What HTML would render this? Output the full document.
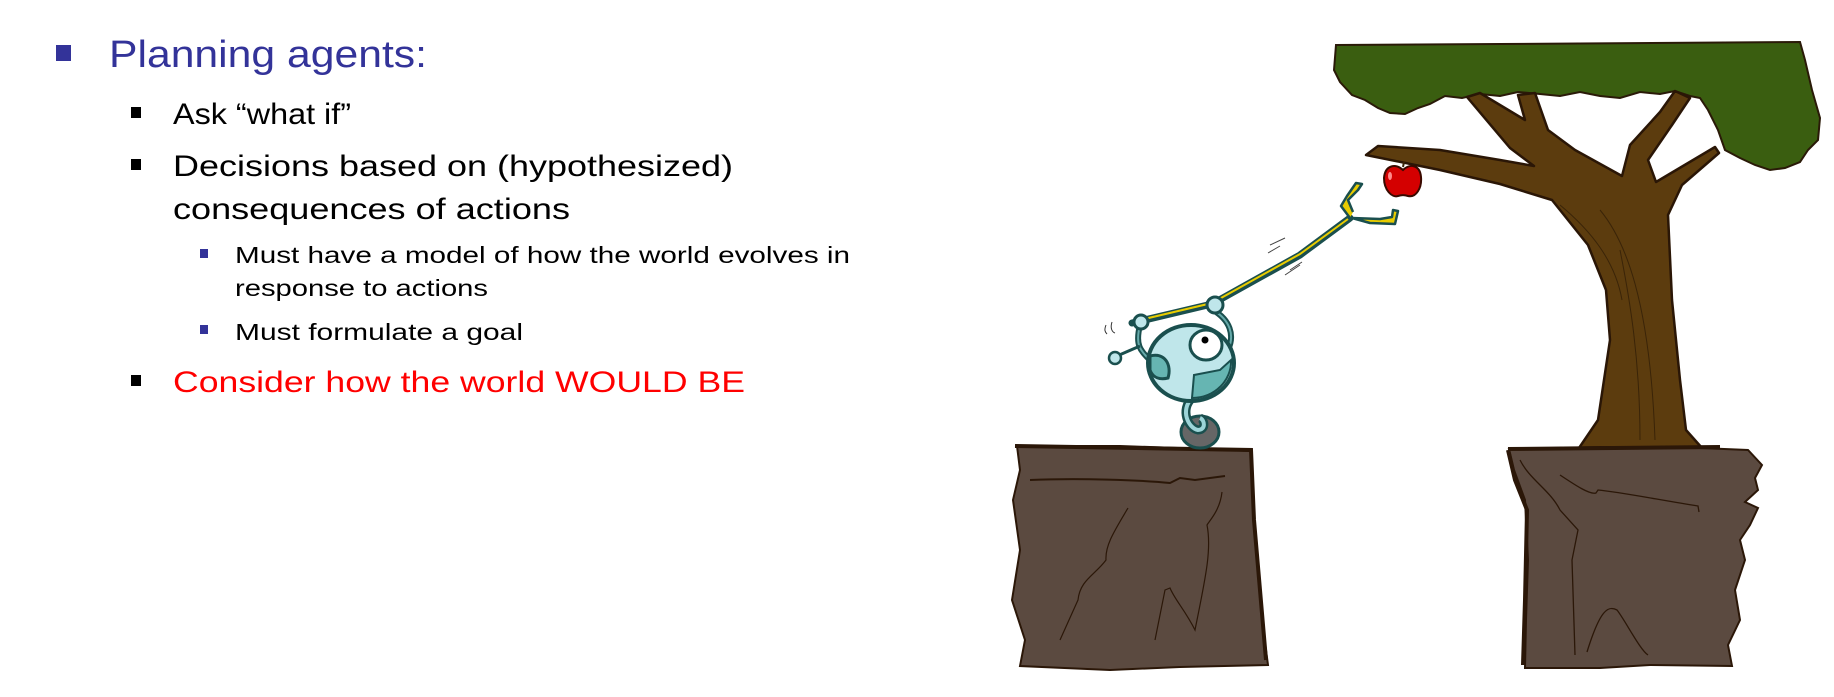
<!DOCTYPE html>
<html><head><meta charset="utf-8"><style>
html,body{margin:0;padding:0;background:#fff;}
body{width:1834px;height:697px;overflow:hidden;position:relative;}
svg{position:absolute;left:0;top:0;}
</style></head><body>
<svg width="1834" height="697" viewBox="0 0 1834 697" xmlns="http://www.w3.org/2000/svg" font-family="'Liberation Sans', sans-serif">
<!-- text -->
<rect x="56" y="45" width="15" height="16" fill="#333399"/>
<text x="109" y="67" font-size="38" fill="#333399" textLength="318" lengthAdjust="spacingAndGlyphs">Planning agents:</text>
<rect x="131" y="107" width="10" height="11" fill="#000"/>
<text x="173" y="124" font-size="30" fill="#000" textLength="178" lengthAdjust="spacingAndGlyphs">Ask “what if”</text>
<rect x="131" y="159" width="10" height="11" fill="#000"/>
<text x="173" y="176" font-size="30" fill="#000" textLength="560" lengthAdjust="spacingAndGlyphs">Decisions based on (hypothesized)</text>
<text x="173" y="219" font-size="30" fill="#000" textLength="397" lengthAdjust="spacingAndGlyphs">consequences of actions</text>
<rect x="200" y="249" width="8" height="9" fill="#333399"/>
<text x="235" y="263" font-size="23" fill="#000" textLength="615" lengthAdjust="spacingAndGlyphs">Must have a model of how the world evolves in</text>
<text x="235" y="296" font-size="23" fill="#000" textLength="253" lengthAdjust="spacingAndGlyphs">response to actions</text>
<rect x="200" y="325" width="8" height="9" fill="#333399"/>
<text x="235" y="340" font-size="23" fill="#000" textLength="288" lengthAdjust="spacingAndGlyphs">Must formulate a goal</text>
<rect x="131" y="375" width="10" height="11" fill="#000"/>
<text x="173" y="392" font-size="30" fill="#f00" textLength="572" lengthAdjust="spacingAndGlyphs">Consider how the world WOULD BE</text>

<!-- canopy -->
<path d="M1336,45 L1500,44 L1800,42 L1805,60 L1812,90 L1820,118 L1818,140 L1808,150 L1800,162 L1785,168 L1770,170 L1755,165 L1740,158 L1725,150 L1718,130 L1708,110 L1700,98 L1690,96 L1675,91 L1660,94 L1640,92 L1620,98 L1600,96 L1580,92 L1560,96 L1540,94 L1518,92 L1500,96 L1480,94 L1462,98 L1445,96 L1430,104 L1418,108 L1405,114 L1390,113 L1378,108 L1365,100 L1352,95 L1340,82 L1334,70 Z" fill="#3a5e10" stroke="#2a1a08" stroke-width="2"/>
<!-- trunk -->
<path d="M1579,448 L1598,420 L1610,340 L1606,290 L1588,245 L1552,200 L1500,184 L1440,170 L1366,155 L1378,146 L1440,150 L1500,160 L1534,166 L1510,148 L1467,97 L1480,93 L1525,120 L1518,95 L1535,93 L1548,130 L1575,150 L1622,176 L1630,145 L1660,112 L1675,91 L1690,98 L1672,125 L1648,160 L1656,182 L1715,147 L1719,153 L1682,185 L1668,215 L1672,300 L1680,380 L1686,430 L1702,448 Z" fill="#5c3c0e" stroke="#2a1606" stroke-width="2.5" stroke-linejoin="round"/>
<path d="M1620,250 C1630,300 1640,360 1640,440 M1600,210 C1625,240 1650,300 1655,440 M1560,205 C1590,230 1615,260 1622,300" stroke="#3a2408" stroke-width="1" fill="none"/>
<!-- apple -->
<path d="M1403,167 L1404,162" stroke="#3a2408" stroke-width="2"/>
<path d="M1403,170 C1396,163 1385,165 1384,178 C1384,190 1392,198 1398,196 C1401,195 1405,195 1408,196 C1416,198 1422,188 1421,177 C1420,165 1410,163 1403,170 Z" fill="#d40000" stroke="#3a0a00" stroke-width="2"/>
<ellipse cx="1390" cy="176" rx="2" ry="4" fill="#ff8a8a"/>

<!-- left cliff -->
<path d="M1017,446 L1120,446 L1205,449 L1251,451 L1254,520 L1262,620 L1268,665 L1180,667 L1110,670 L1020,666 L1025,640 L1012,600 L1020,550 L1013,500 L1020,470 Z" fill="#5b4a40" stroke="#2b1708" stroke-width="2"/>
<path d="M1015,446 L1251,450 L1254,520 L1266,660" stroke="#2b1708" stroke-width="4" fill="none"/>
<path d="M1030,480 C1080,478 1140,480 1170,483 L1180,478 1195,480 1225,476" stroke="#2b1708" stroke-width="2" fill="none"/>
<path d="M1128,508 C1115,530 1105,545 1106,560 C1095,575 1080,580 1078,600 L1060,640 M1222,492 C1220,510 1210,520 1207,525 C1212,550 1205,580 1195,630 C1185,610 1175,600 1170,588 L1165,590 L1155,640" stroke="#2b1708" stroke-width="1.2" fill="none"/>
<!-- right cliff -->
<path d="M1509,449 L1600,447 L1700,448 L1748,450 L1762,465 L1755,478 L1758,490 L1745,502 L1758,508 L1750,525 L1740,540 L1745,560 L1735,590 L1740,620 L1728,645 L1732,666 L1650,665 L1600,668 L1525,668 L1526,620 L1528,560 L1525,500 L1514,470 Z" fill="#5b4a40" stroke="#2b1708" stroke-width="2"/>
<path d="M1508,449 L1720,447 M1508,450 L1515,480 L1527,510 L1525,600 L1523,665" stroke="#2b1708" stroke-width="4" fill="none"/>
<path d="M1520,460 C1530,480 1550,490 1560,510 L1578,530 L1572,560 L1575,655 M1560,475 C1575,485 1590,495 1596,493 L1598,490 C1620,492 1660,500 1698,506 L1699,512 M1587,652 C1600,610 1608,605 1617,610 C1625,620 1640,650 1648,655" stroke="#2b1708" stroke-width="1.3" fill="none"/>

<!-- robot stick -->
<path d="M1132,323 L1212,304 L1300,255 L1350,218" stroke="#1a4f4e" stroke-width="7" fill="none" stroke-linecap="round"/>
<path d="M1140,320 L1212,303 L1300,254 L1348,219" stroke="#e8cc00" stroke-width="2" fill="none"/>
<path d="M1350,218 L1341,206 L1347,196 L1356,183 L1362,184 L1358,190 L1348,200 L1353,212 M1352,218 L1380,219 L1392,217 L1393,210 L1398,211 L1395,224 L1370,223 Z" fill="#e8cc00" stroke="#1a4f4e" stroke-width="2.5" stroke-linejoin="round"/>
<path d="M1270,245 L1285,238 M1268,253 L1280,246 M1285,275 L1300,265 M1290,270 L1302,262" stroke="#444" stroke-width="1"/>
<!-- arms -->
<path d="M1140,325 C1135,345 1140,350 1150,360 M1213,310 C1230,320 1235,335 1228,350" stroke="#1a4f4e" stroke-width="6" fill="none"/>
<path d="M1140,325 C1135,345 1140,350 1150,360 M1213,310 C1230,320 1235,335 1228,350" stroke="#6aa" stroke-width="2" fill="none"/>
<circle cx="1141" cy="322" r="7" fill="#bfe6ea" stroke="#1a4f4e" stroke-width="3"/>
<circle cx="1215" cy="305" r="8" fill="#bfe6ea" stroke="#1a4f4e" stroke-width="3"/>
<!-- antenna -->
<path d="M1117,356 L1140,346" stroke="#1a4f4e" stroke-width="3"/>
<circle cx="1115" cy="358" r="6" fill="#bfe6ea" stroke="#1a4f4e" stroke-width="2.5"/>
<path d="M1106,325 C1104,330 1105,332 1107,334 M1112,322 C1110,328 1112,332 1115,333" stroke="#333" stroke-width="1" fill="none"/>
<!-- neck & wheel -->
<ellipse cx="1200" cy="432" rx="19" ry="16" fill="#666" stroke="#1a4f4e" stroke-width="3"/>
<path d="M1192,398 C1180,410 1188,428 1198,430 C1206,430 1205,420 1200,418" stroke="#1a4f4e" stroke-width="9" fill="none"/>
<path d="M1192,398 C1180,410 1188,428 1198,430 C1206,430 1205,420 1200,418" stroke="#9cd4d8" stroke-width="4" fill="none"/>
<!-- body -->
<ellipse cx="1191" cy="363" rx="43" ry="38" fill="#bfe6ea" stroke="#1a4f4e" stroke-width="4"/>
<path d="M1192,398 L1194,375 L1220,370 L1231,360 C1232,380 1215,398 1192,398 Z" fill="#66b5b2" stroke="#1a4f4e" stroke-width="2"/>
<path d="M1150,356 C1165,352 1172,365 1168,378 C1160,380 1153,378 1150,370 Z" fill="#66b5b2" stroke="#1a4f4e" stroke-width="3"/>
<ellipse cx="1206" cy="345" rx="16" ry="15" fill="#fff" stroke="#1a4f4e" stroke-width="3"/>
<circle cx="1205" cy="340" r="3.5" fill="#000"/>
</svg>
</body></html>
